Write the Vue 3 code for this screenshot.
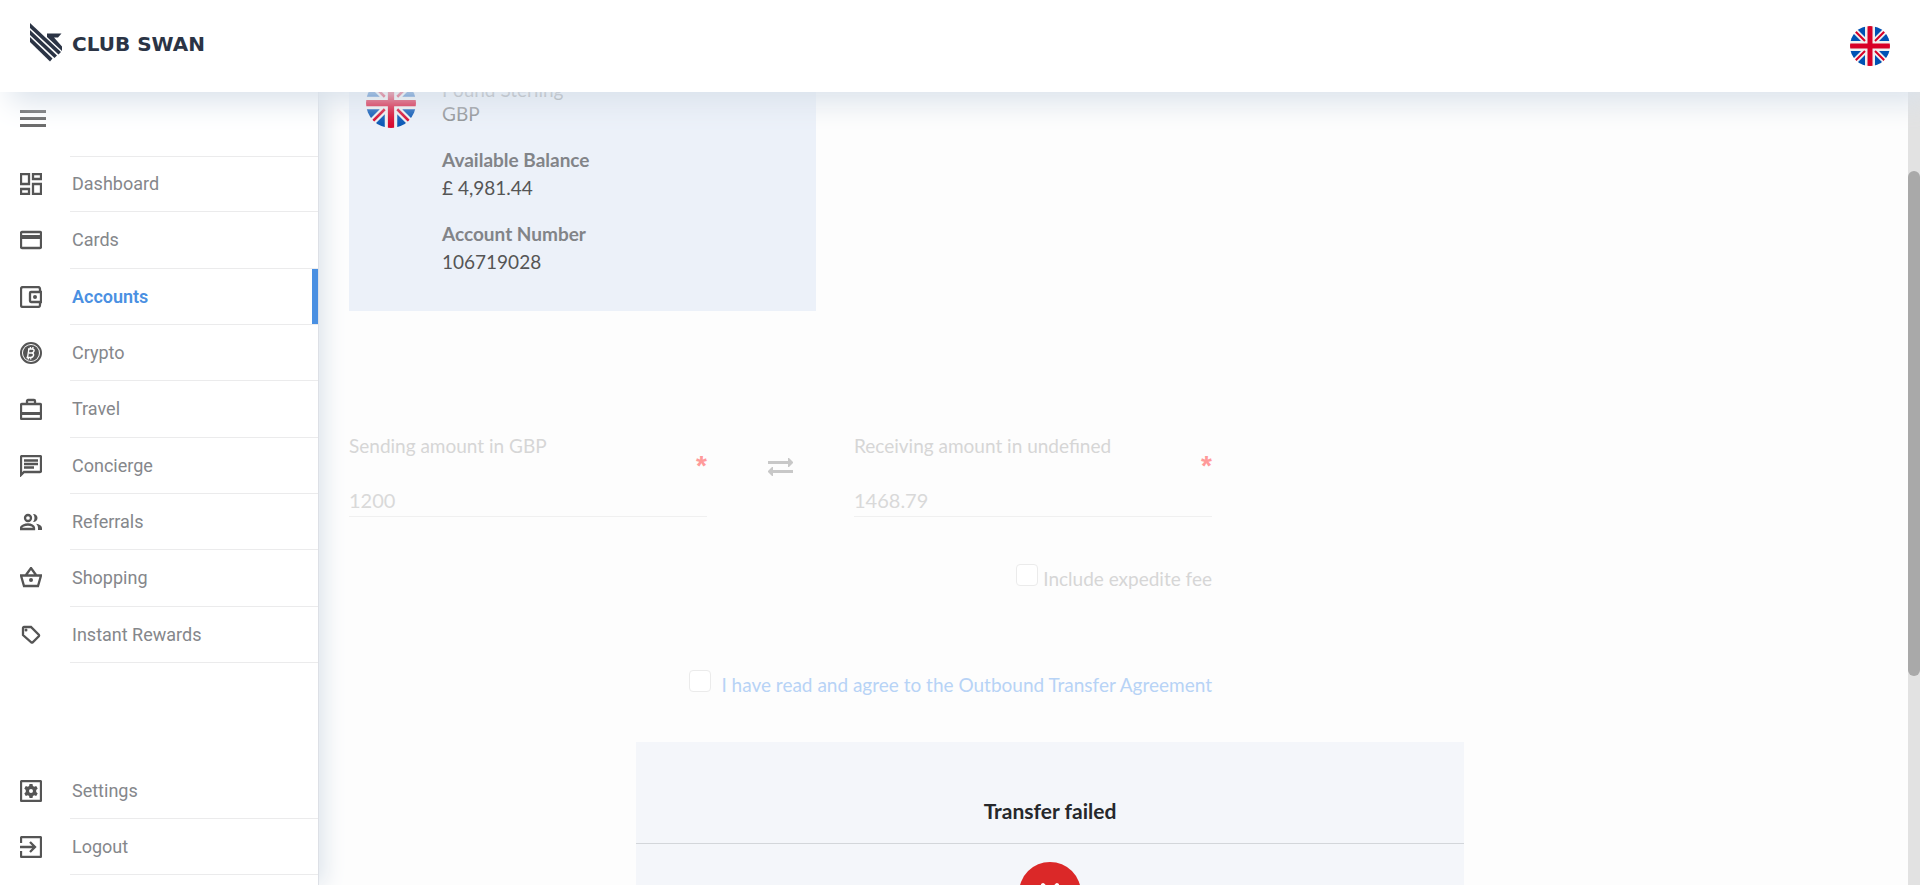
<script setup>
import { ref } from 'vue'

const menu = [
  { label: 'Dashboard', paths: ['M1 1h8v10H1zM13 1h8v5h-8zM1 16h8v5H1zM13 11h8v10h-8z'] },
  { label: 'Cards', paths: ['M2 3h18a1 1 0 0 1 1 1v14a1 1 0 0 1-1 1H2a1 1 0 0 1-1-1V4a1 1 0 0 1 1-1z'], fill: 'M1 6h20v4H1z' },
  { label: 'Accounts', active: true, paths: ['M20 5V3a2 2 0 0 0-2-2H3a2 2 0 0 0-2 2v16a2 2 0 0 0 2 2h15a2 2 0 0 0 2-2v-2', 'M11 6h10v10H11a1 1 0 0 1-1-1V7a1 1 0 0 1 1-1z'], fill: 'M15 9a2 2 0 1 1 0 4a2 2 0 0 1 0-4z' },
  { label: 'Crypto', coin: true },
  { label: 'Travel', paths: ['M2 6h18a1 1 0 0 1 1 1v13a1 1 0 0 1-1 1H2a1 1 0 0 1-1-1V7a1 1 0 0 1 1-1zM7 6V3a1 1 0 0 1 1-1h6a1 1 0 0 1 1 1v3'], fill: 'M1 14h20v3H1z' },
  { label: 'Concierge', paths: ['M1 20V2a1 1 0 0 1 1-1h18a1 1 0 0 1 1 1v14a1 1 0 0 1-1 1H4zM4 5.500h14M4 9h14M4 12.500h10'] },
  { label: 'Referrals', paths: ['M8 4a3 3 0 1 1 0 6a3 3 0 0 1 0-6z', 'M1 18v-1c0-2 4-3.500 7-3.500s6 1.500 6 3.500v1z'], fill: 'M13 3c6 0 6 8 0 8c2-2 2-6 0-8zM16 12.700c3.500.600 6 2 6 4.300v2h-4v-2c0-1.800-.600-3.200-2-4.300z' },
  { label: 'Shopping', paths: ['M1 8.500h20L18 19H4zM6 8l5-7l5 7'], fill: 'M11 11a2 2 0 1 1 0 4a2 2 0 0 1 0-4z' },
  { label: 'Instant Rewards', paths: ['M3 4a1 1 0 0 1 1-1h7l8 8a1 1 0 0 1 0 1l-6.500 6.500a1 1 0 0 1-1 0L3 11z'], fill: 'M6 4.500a1.500 1.500 0 1 1 0 3a1.500 1.500 0 0 1 0-3z' },
]
const footerMenu = [
  { label: 'Settings', paths: ['M2 1h18a1 1 0 0 1 1 1v18a1 1 0 0 1-1 1H2a1 1 0 0 1-1-1V2a1 1 0 0 1 1-1z'], fill: 'M9.500 4h3l.4 2 1.300.800 2-.700 1.500 2.500-1.500 1.400v2l1.500 1.400-1.500 2.500-2-.700-1.300.800-.4 2h-3l-.4-2-1.300-.800-2 .700-1.500-2.500L5.800 12v-2L4.300 8.600l1.500-2.500 2 .700L9.100 6zM11 9a2 2 0 1 0 0 4a2 2 0 0 0 0-4z' },
  { label: 'Logout', paths: ['M1 7V2a1 1 0 0 1 1-1h18a1 1 0 0 1 1 1v18a1 1 0 0 1-1 1H2a1 1 0 0 1-1-1v-5', 'M0 11h15M10 6l5 5l-5 5'] },
]

const sending = ref('1200')
const receiving = ref('1468.79')
const expedite = ref(false)
const agreed = ref(false)
</script>

<template>
  <div class="page">
    <svg class="defs" width="0" height="0" aria-hidden="true">
      <symbol id="uk" viewBox="0 0 40 40">
        <clipPath id="disc"><circle cx="20" cy="20" r="20" /></clipPath>
        <g clip-path="url(#disc)">
          <path fill="#f0f0f0" d="M0 0h40v40H0z" />
          <path fill="#0052b4" d="M15 0v11L4 0zM0 4l11 11H0zM25 0v11L36 0zM40 4L29 15h11zM15 40V29L4 40zM0 36l11-11H0zM25 40V29l11 11zM40 36L29 25h11z" />
          <path stroke="#d80027" stroke-width="2" d="M4 4l11 11M36 4L25 15M4 36l11-11M36 36L25 25" />
          <path fill="#d80027" d="M17.500 0h5v17.500H40v5H22.500V40h-5V22.500H0v-5h17.500z" />
        </g>
      </symbol>
    </svg>

    <header class="topbar">
      <a class="brand" href="#">
        <svg width="33" height="39" viewBox="0 0 33 39" aria-hidden="true">
          <g fill="#2b3445">
            <path d="M0 0L31 29L28.500 31.500L0 5z" />
            <path d="M0 7L27 32.500L24.500 35L0 12z" />
            <path d="M0 14L22.500 35.500L20 38.500L0 19z" />
            <path d="M17 10.500h14.500l-3.500 4h-4l8 9v4.500L17 14z" />
          </g>
        </svg>
        <span>CLUB SWAN</span>
      </a>
      <button class="language" aria-label="English">
        <svg width="40" height="40"><use href="#uk" /></svg>
      </button>
    </header>

    <aside class="sidebar">
      <button class="burger" aria-label="Menu"><i></i><i></i><i></i></button>
      <nav class="nav">
        <ul v-for="(group, g) in [menu, footerMenu]" :key="g" :class="g ? 'bottom' : 'top'">
          <li v-for="item in group" :key="item.label">
            <a href="#" :class="{ active: item.active }">
              <svg class="icon" width="22" height="22" viewBox="0 0 22 22" aria-hidden="true">
                <template v-if="item.coin">
                  <circle cx="11" cy="11" r="10" fill="none" stroke="#555" stroke-width="2" />
                  <circle cx="11" cy="11" r="8" fill="#555" />
                  <path d="M9 6.500l-1.500 9M8 7h4.500q2 .5 1.500 2t-2 2H9M12 11q2 .5 1.500 2.500t-3 2H6.500M10.500 5l-.3 2M13 5l-.3 2M8.500 15.500l-.3 2M11 15.500l-.3 2" fill="none" stroke="#fff" stroke-width="1.400" />
                </template>
                <template v-else>
                  <path v-for="p in item.paths" :key="p" :d="p" fill="none" stroke="#555" stroke-width="2.300" />
                  <path v-if="item.fill" :d="item.fill" fill="#555" fill-rule="evenodd" />
                </template>
              </svg>
              <span class="label">{{ item.label }}</span>
            </a>
          </li>
        </ul>
      </nav>
    </aside>

    <main class="content">
      <div class="inner">
        <section class="account">
          <svg width="50" height="50" viewBox="0 0 40 40" aria-hidden="true"><use href="#uk" /></svg>
          <div>
            <p class="currency">Pound Sterling<br />GBP</p>
            <dl>
              <dt>Available Balance</dt>
              <dd>£ 4,981.44</dd>
              <dt>Account Number</dt>
              <dd>106719028</dd>
            </dl>
          </div>
        </section>

        <form class="transfer" @submit.prevent>
          <div class="amounts">
            <div class="field">
              <label for="sending">Sending amount in GBP</label>
              <span class="required">*</span>
              <input id="sending" v-model="sending" type="text" />
            </div>
            <svg class="swap" width="25" height="18" viewBox="0 0 25 18" aria-hidden="true">
              <path fill="#c8c8c8" d="M0 3h20V0h1l4 4v1l-4 4h-1V6H0zM25 12H5V9H4L0 13v1l4 4h1v-3h20z" />
            </svg>
            <div class="field">
              <label for="receiving">Receiving amount in undefined</label>
              <span class="required">*</span>
              <input id="receiving" v-model="receiving" type="text" />
            </div>
          </div>
          <div class="check">
            <input id="expedite" v-model="expedite" type="checkbox" />
            <label for="expedite">Include expedite fee</label>
          </div>
          <div class="check agreement">
            <input id="agree" v-model="agreed" type="checkbox" aria-label="I agree" />
            <a href="#">I have read and agree to the Outbound Transfer Agreement</a>
          </div>
        </form>

        <section class="result" role="alert">
          <h2>Transfer failed</h2>
          <svg width="62" height="62" viewBox="0 0 62 62" aria-hidden="true">
            <circle cx="31" cy="31" r="31" fill="#db2828" />
            <path d="M24 23l14 16M38 23L24 39" stroke="#fff" stroke-width="4" stroke-linecap="round" />
          </svg>
        </section>
      </div>
    </main>

    <div class="scrollbar"><i></i></div>
  </div>
</template>

<style>
body {
  background: #fdfdfd;
}
</style>

<style scoped>
.page {
  position: relative;
  display: flex;
  height: 100vh;
  overflow: hidden;
  background: #fdfdfd;
  font-family: Lato, "Open Sans", sans-serif;
  font-size: 19px;
}
.page *,
.page *::before {
  box-sizing: border-box;
}
.defs {
  position: absolute;
}
button {
  padding: 0;
  border: 0;
  background: none;
  cursor: pointer;
}
a {
  text-decoration: none;
}
.topbar {
  position: absolute;
  z-index: 3;
  top: 0;
  left: 0;
  right: 0;
  display: flex;
  align-items: center;
  justify-content: space-between;
  height: 92px;
  padding: 0 30px;
  background: #fff;
  box-shadow: 10px 10px 30px #dae2eb;
}
.brand {
  display: flex;
  align-items: center;
  gap: 9px;
  padding-bottom: 8px;
  color: #2b3445;
  font: 700 20px/28px "DejaVu Sans", sans-serif;
}
.brand span {
  padding-top: 4px;
}
.language svg {
  display: block;
}
.sidebar {
  z-index: 2;
  display: flex;
  flex: none;
  flex-direction: column;
  width: 319px;
  padding-top: 110px;
  border-right: 1px solid #dde0e6;
  background: #fff;
  box-shadow: 6px 0 20px #dfe6ed;
}
.burger {
  display: flex;
  flex-direction: column;
  gap: 4px;
  width: 26px;
  margin: 0 0 29px 20px;
}
.burger i {
  height: 3px;
  background: #666;
}
.nav {
  display: flex;
  flex: 1;
  flex-direction: column;
  justify-content: space-between;
  padding-bottom: 10px;
}
.nav ul {
  display: grid;
  grid-auto-rows: 1fr;
  margin: 0;
  padding: 0;
  list-style: none;
}
.nav .top {
  min-height: 507px;
  background: linear-gradient(#ebebec, #ebebec) right top / 248px 1px no-repeat;
}
.nav a {
  display: flex;
  align-items: center;
  height: 100%;
  min-height: 56px;
  padding-left: 20px;
  color: #85878b;
  font: 18px/24px Roboto, sans-serif;
}
.nav .icon {
  flex: none;
  margin-right: 28px;
}
.nav .label {
  display: flex;
  flex: 1;
  align-self: stretch;
  align-items: center;
  padding: 1px 0 0 2px;
  border-bottom: 1px solid #ebebec;
}
.nav .active {
  color: #4a90e2;
  font-weight: 600;
}
.nav .active .label {
  box-shadow: inset -6px 0 #4a90e2;
}
.content {
  flex: 1;
  min-width: 0;
  padding: 50px 42px 0 30px;
}
.inner {
  max-width: 1402px;
}
.account {
  display: flex;
  gap: 26px;
  max-width: 467px;
  margin-bottom: 123px;
  padding: 28px 17px 35px;
  background: #ecf1f9;
  color: #555;
}
.account svg {
  flex: none;
}
.currency {
  margin: 0 0 20px;
  color: #8f9194;
  line-height: 24px;
}
dl {
  margin: 0;
  line-height: 28px;
}
dt {
  color: #828488;
  font-weight: 700;
}
dd {
  margin: 0 0 18px;
}
dd:last-child {
  margin: 0;
}
.transfer {
  max-width: 863px;
  color: #d6d6d6;
}
.amounts {
  display: grid;
  grid-template-columns: 1fr 147px 1fr;
  margin-bottom: 47px;
}
.field {
  display: flex;
  flex-direction: column;
  line-height: 24px;
}
.required {
  align-self: flex-end;
  height: 20px;
  color: #ff9a9a;
  font: 700 28px/16px "Liberation Sans", sans-serif;
}
.field input {
  width: 100%;
  height: 39px;
  padding: 6px 0 0;
  border: 0;
  border-bottom: 1px solid #f0f0f0;
  outline: 0;
  background: none;
  color: #d9d9d9;
  font: inherit;
  font-size: 20px;
}
.swap {
  margin-top: 24px;
  justify-self: center;
}
.check {
  display: flex;
  justify-content: flex-end;
  gap: 5px;
  line-height: 30px;
}
.check input {
  flex: none;
  width: 22px;
  height: 22px;
  margin: 0;
  border: 1px solid #ebebeb;
  border-radius: 4px;
  background: #fff;
  appearance: none;
}
.agreement {
  gap: 10px;
  margin: 76px 0 42px;
}
.agreement a {
  color: #b7d3f6;
}
.result {
  display: flex;
  flex-direction: column;
  align-items: center;
  width: 828px;
  max-width: 100%;
  margin: 0 auto;
  background: #f4f6fa;
}
.result h2 {
  align-self: stretch;
  margin: 0 0 18px;
  padding: 54px 0 18px;
  border-bottom: 1px solid #d3d6da;
  color: #26282b;
  font-size: 21px;
  line-height: 29px;
  text-align: center;
}
.scrollbar {
  position: absolute;
  z-index: 1;
  top: 0;
  right: 0;
  bottom: 0;
  width: 12px;
  padding-top: 171px;
  background: #e2e2e2;
}
.scrollbar i {
  display: block;
  height: 505px;
  border-radius: 6px;
  background: #a9a9a9;
}
</style>
